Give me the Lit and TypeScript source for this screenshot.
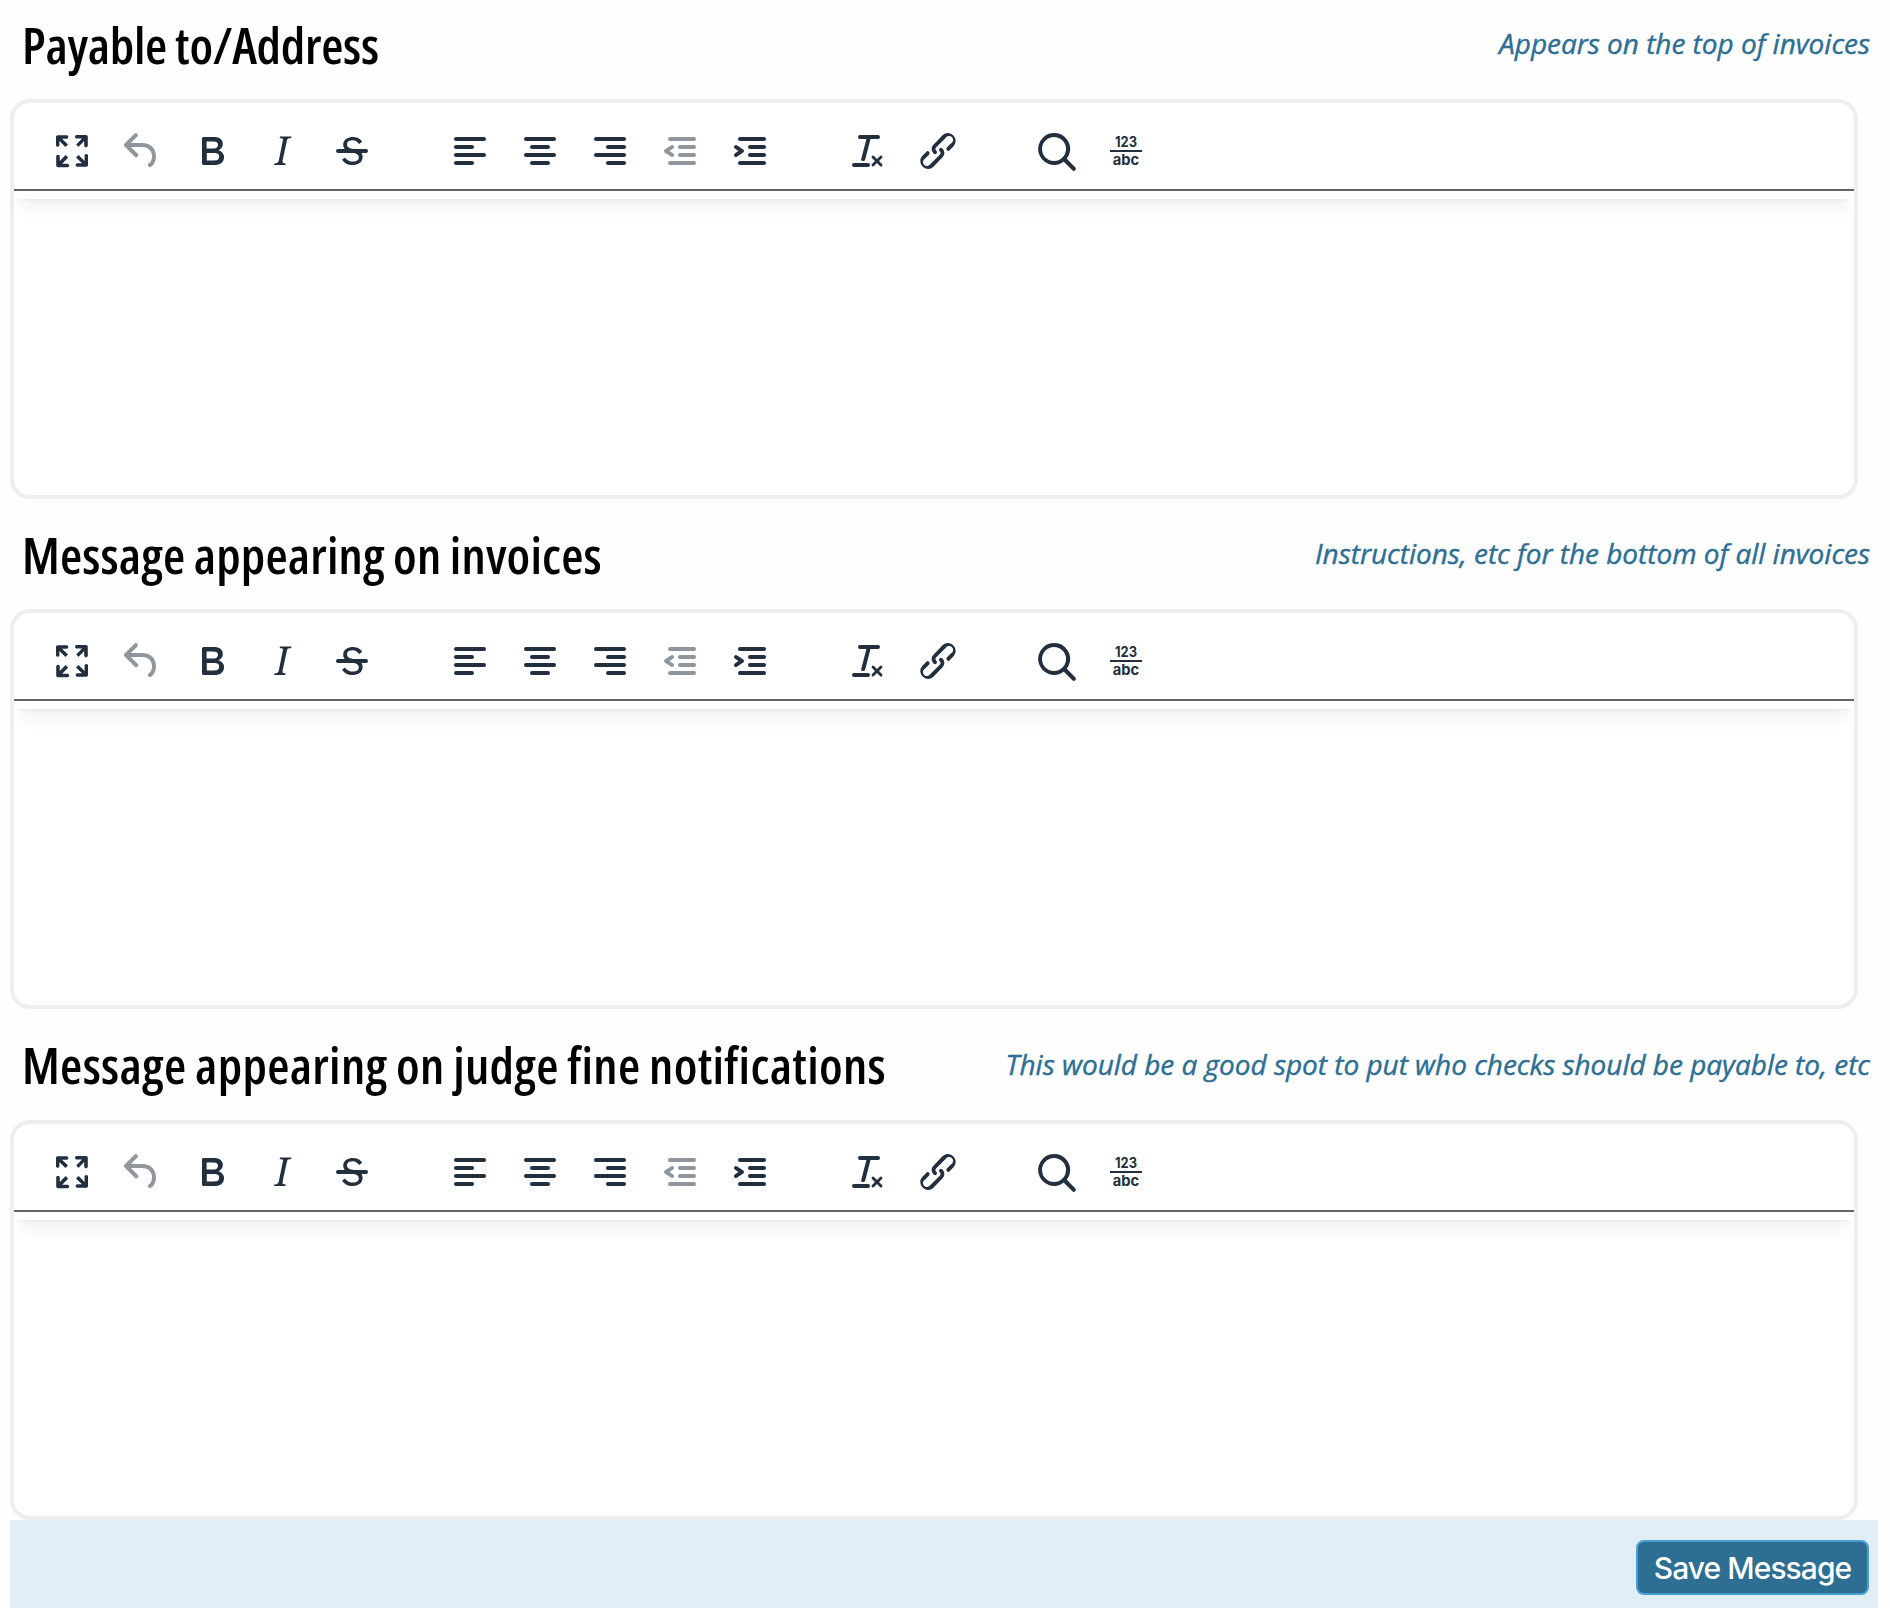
import { LitElement, html, css, svg } from "lit";
import { customElement, property } from "lit/decorators.js";

const bars = (...lines: number[][]) =>
  svg`${lines.map(([x1, x2, y]) => svg`<path class="bar" d="M${x1} ${y}H${x2}"/>`)}`;

const icons: Record<string, unknown> = {
  fullscreen: svg`<path d="m15.3 10-1.2-1.3 2.9-3h-2.3a.9.9 0 1 1 0-1.7H19c.5 0 .9.4.9.9v4.4a.9.9 0 1 1-1.8 0V7l-2.9 3Zm0 4 3 3v-2.3a.9.9 0 1 1 1.7 0V19c0 .5-.4.9-.9.9h-4.4a.9.9 0 1 1 0-1.8H17l-3-2.9 1.3-1.2ZM10 15.4l-2.9 3h2.3a.9.9 0 1 1 0 1.7H5a.9.9 0 0 1-.9-.9v-4.4a.9.9 0 1 1 1.8 0V17l2.9-3 1.2 1.3ZM8.7 10 5.7 7v2.3a.9.9 0 0 1-1.7 0V5c0-.5.4-.9.9-.9h4.4a.9.9 0 0 1 0 1.8H7l3 2.9-1.3 1.2Z"/>`,
  undo: svg`<path d="M6.4 8H12c3.7 0 6.2 2 6.8 5.1.6 2.7-.4 5.6-2.3 6.8a1 1 0 0 1-1-1.8c1.1-.6 1.8-2.7 1.4-4.6-.5-2.1-2.1-3.5-4.9-3.5H6.4l3.3 3.3a1 1 0 1 1-1.4 1.4l-5-5a1 1 0 0 1 0-1.4l5-5a1 1 0 0 1 1.4 1.4L6.4 8Z"/>`,
  bold: svg`<path d="M7.8 19c-.3 0-.5 0-.6-.2l-.2-.5V5.7c0-.2 0-.4.2-.5l.6-.2h5c1.5 0 2.7.3 3.5 1 .7.6 1.1 1.4 1.1 2.5a3 3 0 0 1-.6 1.9c-.4.6-1 1-1.6 1.2.4.1.9.3 1.3.6s.8.7 1 1.2c.4.4.5 1 .5 1.6 0 1.3-.4 2.3-1.3 3-.8.7-2.1 1-3.8 1H7.8Zm5-8.3c.6 0 1.2-.1 1.6-.5.4-.3.6-.7.6-1.3 0-1.1-.8-1.7-2.3-1.7H9.3v3.5h3.4Zm.5 6c.7 0 1.3-.1 1.7-.4.4-.4.6-.9.6-1.5s-.2-1-.7-1.4c-.4-.3-1-.4-2-.4H9.4v3.8h4Z" fill-rule="evenodd"/>`,
  italic: svg`<path d="m16.7 4.7-.1.9h-.3c-.6 0-1 0-1.4.3-.3.3-.4.6-.5 1.1l-2.1 9.8v.6c0 .5.4.8 1.4.8h.2l-.2.8H8l.2-.8h.2c1.1 0 1.8-.5 2-1.5l2-9.8.1-.5c0-.6-.4-.8-1.4-.8h-.3l.2-.9h5.8Z"/>`,
  strike: svg`<path d="M15.6 8.5c-.5-.7-1-1.1-1.3-1.3-.6-.4-1.3-.6-2-.6-2.7 0-2.8 1.7-2.8 2.1 0 1.6 1.8 2 3.2 2.3 4.4.9 4.6 2.8 4.6 3.9 0 1.4-.7 4.1-5 4.1A6.2 6.2 0 0 1 7 16.4l1.5-1.1c.4.6 1.6 2 3.7 2 1.6 0 2.5-.4 3-1.2.4-.8.3-2-.8-2.6-.7-.4-1.6-.7-2.9-1-1-.2-3.9-.8-3.9-3.6C7.6 6 10.3 5 12.4 5c2.9 0 4.2 1.6 4.7 2.4l-1.5 1.1Z"/><path d="M5 11h14a1 1 0 0 1 0 2H5a1 1 0 0 1 0-2Z"/>`,
  left: bars([5, 19, 6], [5, 13, 10], [5, 19, 14], [5, 13, 18]),
  center: bars([5, 19, 6], [8, 16, 10], [5, 19, 14], [8, 16, 18]),
  right: bars([5, 19, 6], [11, 19, 10], [5, 19, 14], [11, 19, 18]),
  outdent: svg`${bars([7, 19, 6], [12, 19, 10], [12, 19, 14], [7, 19, 18])}<path d="M8.6 13.2a1 1 0 0 1-1.2 1.6l-3-2a1 1 0 0 1 0-1.6l3-2a1 1 0 0 1 1.2 1.6L6.8 12l1.8 1.2Z"/>`,
  indent: svg`${bars([7, 19, 6], [12, 19, 10], [12, 19, 14], [7, 19, 18])}<path d="M4.4 13.2 6.2 12l-1.8-1.2a1 1 0 0 1 1.2-1.6l3 2a1 1 0 0 1 0 1.6l-3 2a1 1 0 1 1-1.2-1.6Z"/>`,
  clear: svg`<path d="M13.2 6a1 1 0 0 1 0 .2l-2.6 10a1 1 0 0 1-1 .8h-.2a.8.8 0 0 1-.8-1l2.6-10H8a1 1 0 1 1 0-2h9a1 1 0 0 1 0 2h-3.8ZM5 18h7a1 1 0 0 1 0 2H5a1 1 0 0 1 0-2Zm13 1.5L16.5 18 15 19.5a.7.7 0 0 1-1-1l1.5-1.5-1.5-1.5a.7.7 0 0 1 1-1l1.5 1.5 1.5-1.5a.7.7 0 0 1 1 1L17.5 17l1.5 1.5a.7.7 0 0 1-1 1Z"/>`,
  link: svg`<path d="M6.2 12.3a1 1 0 0 1 1.4 1.4l-2 2a2 2 0 1 0 2.6 2.8l4.8-4.8a1 1 0 0 0 0-1.4 1 1 0 1 1 1.4-1.3 2.9 2.9 0 0 1 0 4L9.6 20a3.9 3.9 0 0 1-5.5-5.5l2-2Zm11.6-.6a1 1 0 0 1-1.4-1.4l2-2a2 2 0 1 0-2.6-2.8L11 10.3a1 1 0 0 0 0 1.4A1 1 0 1 1 9.6 13a2.9 2.9 0 0 1 0-4L14.4 4a3.9 3.9 0 0 1 5.5 5.5l-2 2Z"/>`,
  search: svg`<path d="M16 17.3a8 8 0 1 1 1.4-1.4l4.3 4.4a1 1 0 0 1-1.4 1.4l-4.4-4.3Zm-5-.3a6 6 0 1 0 0-12 6 6 0 0 0 0 12Z" fill-rule="evenodd"/>`,
  count: svg`<path d="M4 11.5h16v1H4Z"/><text class="digits" x="6.5" y="10" textLength="11" lengthAdjust="spacingAndGlyphs">123</text><text class="letters" x="5.4" y="19" textLength="13.2" lengthAdjust="spacingAndGlyphs">abc</text>`,
};

const groups = [
  ["fullscreen", "undo", "bold", "italic", "strike"],
  ["left", "center", "right", "outdent", "indent"],
  ["clear", "link"],
  ["search", "count"],
];
const disabled = new Set(["undo", "outdent"]);

@customElement("rich-editor")
export class RichEditor extends LitElement {
  static styles = css`
    :host { display: flex; flex-direction: column; box-sizing: border-box; width: 1848px; height: 400px; border: 4px solid #eee; border-radius: 20px; background: #fff; overflow: hidden; }
    .header { height: 96px; flex: none; box-sizing: border-box; background: #fff; box-shadow: 0 4px 4px -4px rgba(34,47,62,.1), 0 16px 16px -8px rgba(34,47,62,.07); }
    .toolbar { display: flex; gap: 70px; height: 88px; box-sizing: border-box; padding: 24px 34px 0; border-bottom: 2px solid #626467; }
    .group { display: flex; gap: 22px; }
    .icon { width: 48px; height: 48px; fill: #222f3e; color: #222f3e; display: block; }
    .off { opacity: .5; }
    .bar { stroke: currentColor; stroke-width: 2; stroke-linecap: round; }
    .digits { font: 700 7.2px Inter, sans-serif; }
    .letters { font: 700 7.4px Inter, sans-serif; }
  `;
  render() {
    return html`<div class="header"><div class="toolbar">${groups.map(
      (g) => html`<div class="group">${g.map(
        (n) => html`<svg class="icon ${disabled.has(n) ? "off" : ""}" viewBox="0 0 24 24">${icons[n]}</svg>`
      )}</div>`
    )}</div></div>`;
  }
}

@customElement("message-section")
export class MessageSection extends LitElement {
  @property() heading = "";
  @property() note = "";
  @property({ type: Number }) tracking = 0;
  static styles = css`
    :host { display: block; height: 510px; }
    :host(:last-child) .top { height: 100px; }
    :host(:last-child) .note { line-height: 88px; }
    .top { display: flex; justify-content: space-between; height: 99px; box-sizing: border-box; padding: 0 20px 0 22px; white-space: nowrap; }
    .title { margin: 0; font: 600 51px/88px "Open Sans", sans-serif; font-stretch: 75%; word-spacing: -1px; color: #000; }
    .note { font: italic 400 28px/86px "Open Sans", sans-serif; letter-spacing: -.03px; color: #2d6e92; -webkit-text-stroke: .4px #2d6e92; }
    .editor { margin-left: 10px; }
  `;
  render() {
    return html`<div class="top"><h4 class="title" style="letter-spacing:${this.tracking}px">${this.heading}</h4><span class="note">${this.note}</span></div>
      <rich-editor class="editor"></rich-editor>`;
  }
}

@customElement("app-root")
export class AppRoot extends LitElement {
  static styles = css`
    :host { display: flex; flex-direction: column; height: 1608px; overflow: hidden; background: #fefefe; }
    .sections { height: 1520px; flex: none; }
    .footer { display: flex; justify-content: flex-end; align-items: flex-start; flex: 1; margin: 0 12px 0 10px; padding: 20px 9px 0; background: #e1eef6; }
    .save { box-sizing: border-box; width: 233px; height: 55px; padding: 0; border: 2px solid #479fd4; border-radius: 8px; background: #2d6e92; color: #fff; font: 450 30px/50px Inter, sans-serif; letter-spacing: -.95px; }
  `;
  render() {
    return html`<div class="sections">
        <message-section tracking="-0.27" heading="Payable to/Address" note="Appears on the top of invoices"></message-section>
        <message-section tracking="0.15" heading="Message appearing on invoices" note="Instructions, etc for the bottom of all invoices"></message-section>
        <message-section tracking="0.31" heading="Message appearing on judge fine notifications" note="This would be a good spot to put who checks should be payable to, etc"></message-section>
      </div>
      <div class="footer"><button class="save">Save Message</button></div>`;
  }
}
